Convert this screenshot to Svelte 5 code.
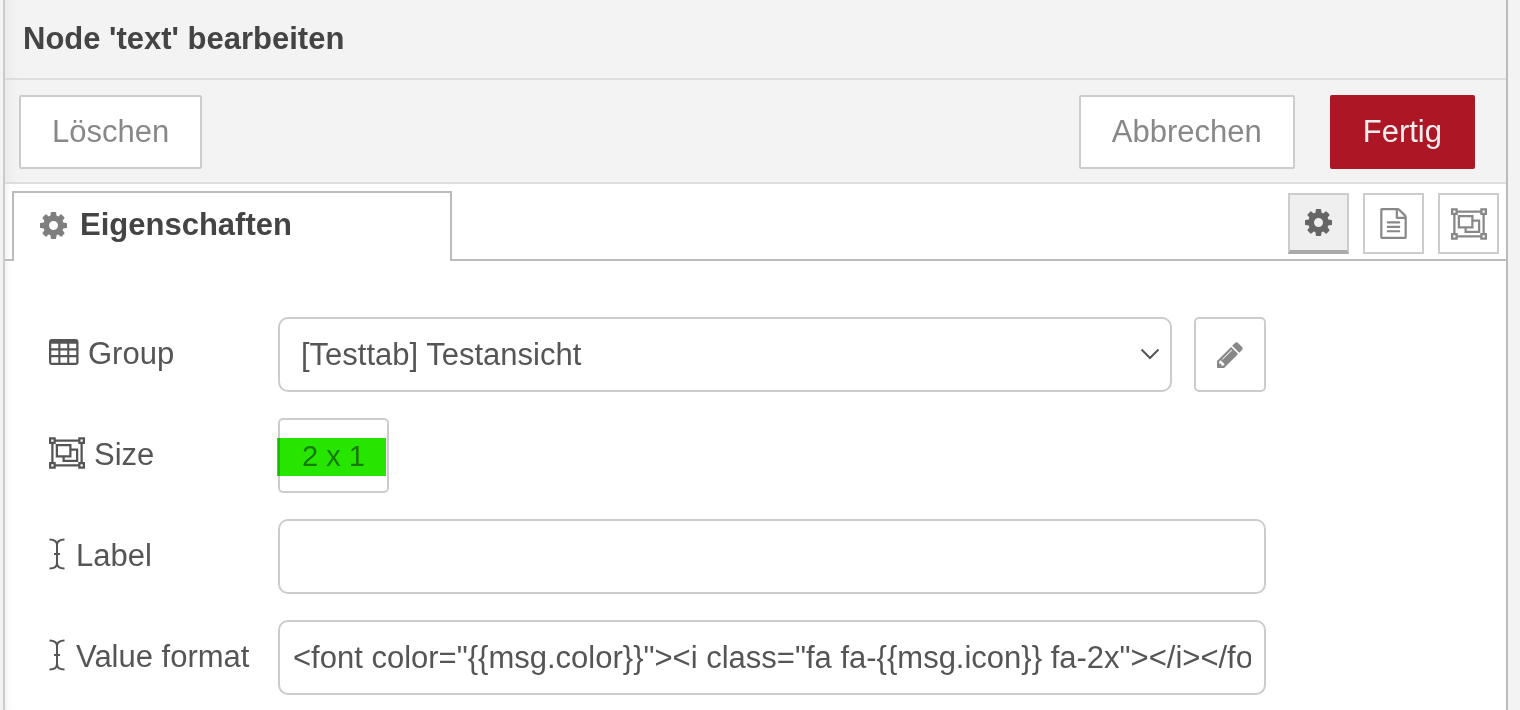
<script lang="ts">
  let group = $state("testansicht");
  let label = $state("");
  let format = $state(
    '<font color="{{msg.color}}"><i class="fa fa-{{msg.icon}} fa-2x"></i></font>'
  );
  let view = $state("properties");
</script>

{#snippet cog()}
  <svg class="cog" viewBox="128 128 1536 1536" aria-hidden="true">
    <path
      d="M1152 896q0-106-75-181t-181-75-181 75-75 181 75 181 181 75 181-75 75-181zm512-109v222q0 12-8 23t-20 13l-185 28q-19 54-39 91 35 50 107 138 10 12 10 25t-9 23q-27 37-99 108t-94 71q-12 0-26-9l-138-108q-44 23-91 38-16 136-29 186-7 28-36 28h-222q-14 0-24.5-8.5t-11.5-21.5l-28-184q-49-16-90-37l-141 107q-10 9-25 9-14 0-25-11-126-114-165-168-7-10-7-23 0-12 8-23 15-21 51-66.5t54-70.5q-27-50-41-99l-183-27q-13-2-21-12.5t-8-23.5v-222q0-12 8-23t19-13l186-28q14-46 39-92-40-57-107-138-10-12-10-24 0-10 9-23 26-36 98.5-107.5t94.5-71.5q13 0 26 10l138 107q44-23 91-38 16-136 29-186 7-28 36-28h222q14 0 24.5 8.5t11.5 21.5l28 184q49 16 90 37l142-107q9-9 24-9 13 0 25 10 129 119 165 170 7 8 7 22 0 12-8 23-15 21-51 66.5t-54 70.5q26 50 41 98l183 28q13 2 21 12.5t8 23.5z"
    />
  </svg>
{/snippet}

{#snippet objectGroup()}
  <svg class="object-group" viewBox="0 0 2048 1792" aria-hidden="true">
    <path
      fill-rule="evenodd"
      d="M2048 384H1920V1408H2048V1792H1664V1664H384V1792H0V1408H128V384H0V0H384V128H1664V0H2048ZM1792 128V256H1920V128ZM128 128V256H256V128ZM128 1536V1664H256V1536ZM1792 1536V1664H1920V1536ZM1664 1536V1408H1792V384H1664V256H384V384H256V1408H384V1536ZM384 384H1280V640H1664V1408H768V1152H384ZM512 512V1024H1152V512ZM1280 768V1152H896V1280H1536V768Z"
    />
  </svg>
{/snippet}

{#snippet cursor()}
  <svg class="line cursor" viewBox="0 0 18 32" aria-hidden="true">
    <path d="M0.500 1.500Q8 1.500 8 7V25Q8 30.500 0.500 30.500M15.500 1.500Q8 1.500 8 7M8 25Q8 30.500 15.500 30.500M5 16H11" />
  </svg>
{/snippet}

<div class="tray">
  <header>Node 'text' bearbeiten</header>

  <div class="toolbar">
    <button class="btn">Löschen</button>
    <div class="actions">
      <button class="btn">Abbrechen</button>
      <button class="btn primary">Fertig</button>
    </div>
  </div>

  <div class="tabs">
    <h2 class="tab">{@render cog()} Eigenschaften</h2>
    <div class="views">
      <button
        class:active={view === "properties"}
        aria-label="Eigenschaften"
        onclick={() => (view = "properties")}
      >
        {@render cog()}
      </button>
      <button
        class:active={view === "description"}
        aria-label="Beschreibung"
        onclick={() => (view = "description")}
      >
        <svg class="file" viewBox="128 0 1536 1792" aria-hidden="true">
          <path
            d="M1596 380q28 28 48 76t20 88v1152q0 40-28 68t-68 28h-1344q-40 0-68-28t-28-68v-1600q0-40 28-68t68-28h896q40 0 88 20t76 48zm-444-244v376h376q-10-29-22-41l-313-313q-12-12-41-22zm384 1528v-1024h-416q-40 0-68-28t-28-68v-416h-768v1536h1280zm-1024-864q0-14 9-23t23-9h704q14 0 23 9t9 23v64q0 14-9 23t-23 9h-704q-14 0-23-9t-9-23v-64zm736 224q14 0 23 9t9 23v64q0 14-9 23t-23 9h-704q-14 0-23-9t-9-23v-64q0-14 9-23t23-9h704zm0 256q14 0 23 9t9 23v64q0 14-9 23t-23 9h-704q-14 0-23-9t-9-23v-64q0-14 9-23t23-9h704z"
          />
        </svg>
      </button>
      <button
        class:active={view === "appearance"}
        aria-label="Darstellung"
        onclick={() => (view = "appearance")}
      >
        {@render objectGroup()}
      </button>
    </div>
  </div>

  <form onsubmit={(e) => e.preventDefault()}>
    <div class="row">
      <label for="group">
        <svg class="table" viewBox="0 0 30 26" aria-hidden="true">
          <path
            fill-rule="evenodd"
            d="M3 0H26.500A3 3 0 0 1 29.500 3V23A3 3 0 0 1 26.500 26H3A3 3 0 0 1 0 23V3A3 3 0 0 1 3 0ZM2.300 4.700V9.300H9.300V4.700ZM11.400 4.700V9.300H18.200V4.700ZM20.300 4.700V9.300H27.200V4.700ZM2.300 11.500V16H9.300V11.500ZM11.400 11.500V16H18.200V11.500ZM20.300 11.500V16H27.200V11.500ZM2.300 18.200V23.700H9.300V18.200ZM11.400 18.200V23.700H18.200V18.200ZM20.300 18.200V23.700H27.200V18.200Z"
          />
        </svg>
        Group
      </label>
      <div class="select">
        <select id="group" bind:value={group}>
          <option value="testansicht">[Testtab] Testansicht</option>
        </select>
        <svg class="line chevron" viewBox="0 0 20 12" aria-hidden="true">
          <path d="M1.500 1.500L10 10L18.500 1.500" />
        </svg>
      </div>
      <button class="edit" aria-label="Group bearbeiten">
        <svg class="pencil" viewBox="128 128 1536 1536" aria-hidden="true">
          <path
            d="M491 1536l91-91-235-235-91 91v107h128v128h107zm523-928q0-22-22-22-10 0-17 7l-542 542q-7 7-7 17 0 22 22 22 10 0 17-7l542-542q7-7 7-17zm-54-192l416 416-832 832h-416v-416zm683 96q0 53-37 90l-166 166-416-416 166-165q36-38 90-38 53 0 91 38l235 234q37 39 37 91z"
          />
        </svg>
      </button>
    </div>

    <div class="row">
      <label for="size">{@render objectGroup()} Size</label>
      <div class="marked">
        <button id="size" class="size">2 x 1</button>
      </div>
    </div>

    <div class="row">
      <label for="label">{@render cursor()} Label</label>
      <input id="label" type="text" bind:value={label} />
    </div>

    <div class="row">
      <label for="format">{@render cursor()} Value format</label>
      <input id="format" type="text" bind:value={format} />
    </div>
  </form>
</div>

<style>
  :global(body) {
    background: #f3f3f3;
  }
  .tray {
    box-sizing: border-box;
    min-height: 100vh;
    margin: 0 12px 0 3px;
    border-left: 2px solid #ccc;
    border-right: 2px solid #bbb;
    background: #fff;
    box-shadow: inset 8px 0 8px -8px rgba(0, 0, 0, 0.1);
    color: #555;
    font: 31px/36px "Liberation Sans", Arial, sans-serif;
  }
  header,
  .toolbar {
    border-bottom: 2px solid #ddd;
    background: linear-gradient(to right, #ebebeb, #f3f3f3 12px);
  }
  header {
    padding: 21px 18px;
    color: #444;
    font-weight: bold;
  }
  button,
  input,
  select {
    box-sizing: border-box;
    border: 2px solid #ccc;
    background: #fff;
    color: inherit;
    font: inherit;
  }
  button {
    color: #888;
    cursor: pointer;
  }
  svg {
    display: block;
    flex: none;
    fill: currentColor;
  }
  .line {
    fill: none;
    stroke: currentColor;
    stroke-width: 2;
  }

  .toolbar {
    display: flex;
    justify-content: space-between;
    padding: 15px 31px 13px 14px;
  }
  .actions {
    display: flex;
    gap: 35px;
  }
  .btn {
    height: 74px;
    padding: 0 31px;
    border-radius: 2px;
  }
  .primary {
    border-color: #ad1625;
    background: #ad1625;
    color: #eee;
  }

  .tabs {
    display: flex;
    justify-content: space-between;
    padding: 7px 7px 0;
    background: linear-gradient(#bbb, #bbb) bottom / 100% 2px no-repeat;
  }
  .tab {
    display: flex;
    align-items: center;
    gap: 13px;
    box-sizing: border-box;
    width: 440px;
    height: 70px;
    margin: 0;
    padding: 0 26px 4px;
    border: 2px solid #bbb;
    border-bottom: 0;
    background: #fff;
    color: #444;
    font-size: 31px;
  }
  .tab .cog {
    color: #7f7f7f;
  }
  .views {
    display: flex;
    gap: 14px;
    padding-top: 2px;
  }
  .views button {
    display: grid;
    place-items: center;
    width: 61px;
    height: 61px;
    padding: 0;
  }
  .views .active {
    border-bottom: 4px solid #aaa;
    background: #efefef;
    color: #666;
  }
  .cog {
    width: 27px;
    height: 27px;
  }
  .file {
    width: 27px;
    height: 31px;
  }
  .object-group {
    width: 36px;
    height: 32px;
  }
  .cursor {
    width: 18px;
    height: 32px;
  }
  .table {
    width: 30px;
    height: 26px;
  }
  .pencil {
    width: 26px;
    height: 26px;
  }

  form {
    display: grid;
    gap: 26px;
    padding: 56px 240px 14px 44px;
  }
  .row {
    display: flex;
    align-items: center;
    height: 75px;
  }
  label {
    display: flex;
    flex: none;
    align-items: center;
    gap: 9px;
    box-sizing: border-box;
    width: 229px;
    padding-bottom: 2px;
    white-space: nowrap;
  }
  label svg {
    margin-bottom: 3px;
  }
  input,
  select {
    width: 100%;
    min-width: 0;
    height: 75px;
    padding: 0 13px;
    border-radius: 10px;
  }
  .select {
    position: relative;
    flex: 1;
    min-width: 0;
  }
  select {
    display: block;
    padding: 0 21px;
    appearance: none;
  }
  .chevron {
    position: absolute;
    top: 31px;
    right: 12px;
    width: 20px;
    height: 12px;
    pointer-events: none;
  }
  .edit,
  .size {
    height: 75px;
    border-radius: 5px;
  }
  .edit {
    display: grid;
    place-items: center;
    width: 72px;
    margin-left: 22px;
    padding: 0;
  }
  .size {
    padding: 0 22px;
    font-size: 29px;
  }
  .marked {
    position: relative;
  }
  /* highlighter stroke across the size value */
  .marked::after {
    content: "";
    position: absolute;
    inset: 20px 3px 17px -1px;
    background: #26e600;
    mix-blend-mode: multiply;
    pointer-events: none;
  }
</style>
